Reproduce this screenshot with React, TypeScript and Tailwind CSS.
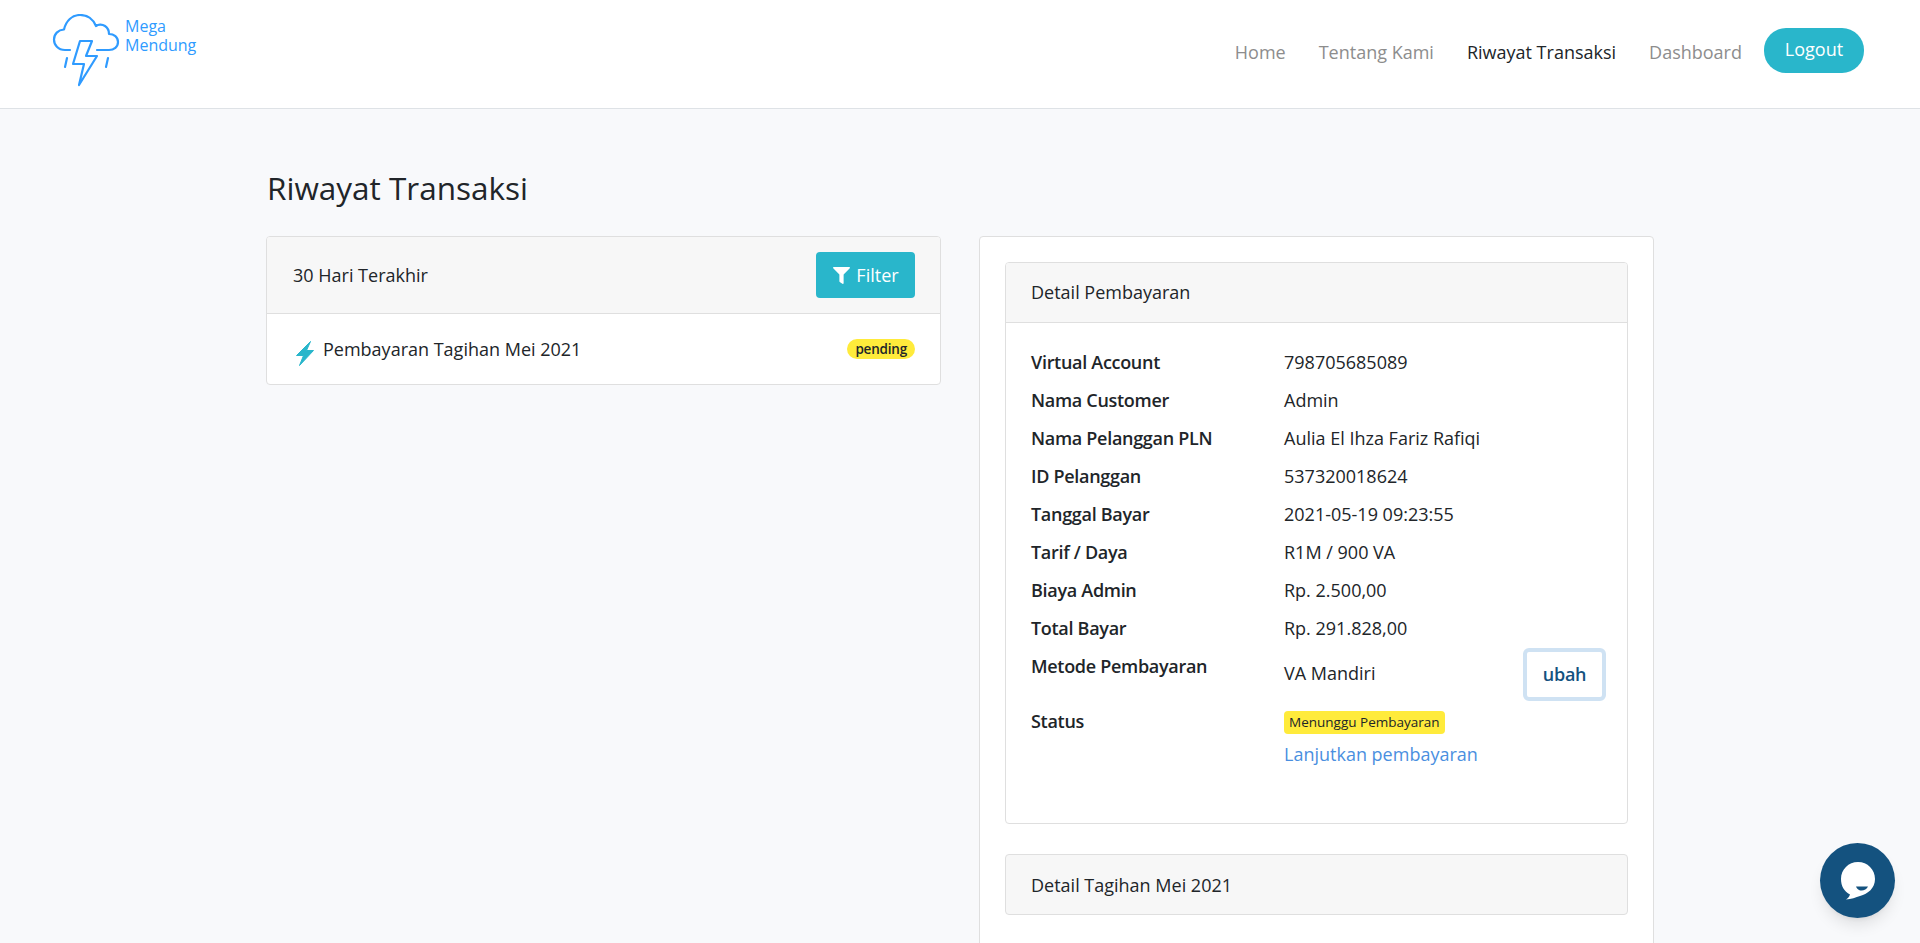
import { FaFilter } from 'react-icons/fa'

const rows = [
  ['Virtual Account', '798705685089'],
  ['Nama Customer', 'Admin'],
  ['Nama Pelanggan PLN', 'Aulia El Ihza Fariz Rafiqi'],
  ['ID Pelanggan', '537320018624'],
  ['Tanggal Bayar', '2021-05-19 09:23:55'],
  ['Tarif / Daya', 'R1M / 900 VA'],
  ['Biaya Admin', 'Rp. 2.500,00'],
  ['Total Bayar', 'Rp. 291.828,00'],
]

function Logo() {
  return (
    <div className="flex items-start">
      <svg width="68" height="76" viewBox="0 0 68 76" fill="none" stroke="#2f9bff" strokeWidth="2.2" strokeLinecap="round" strokeLinejoin="round" className="mt-[14px]">
        <path d="M18 36H13C6 36 2 31 2 25.500C2 20 6 16 12 15.500C14 7 20 1 28 1C35 1 41 5 44 12C46 10.500 50 10 53 12C56 14 57 17 57 20C62 20 66 23 66 28C66 33 62 36 57 36H45" />
        <path d="M28 27H40L34 42H45L27 71L32 50H21Z" />
        <path d="M15 44L13 53" />
        <path d="M56 44L54 53" />
      </svg>
      <div className="mt-[17px] ml-[5px] text-[16px] leading-[19px] text-[#2f9bff]">
        <div>Mega</div>
        <div>Mendung</div>
      </div>
    </div>
  )
}

export default function App() {
  return (
    <div className="h-[943px] overflow-hidden bg-[#f8f9fb] font-['Open_Sans',sans-serif] text-[18px] text-[#212529]">
      <nav className="h-[109px] bg-white border-b border-[#dee2e6] pl-[52px] pr-[56px] flex justify-between items-start">
        <Logo />
        <div className="flex items-center mt-[28px]">
          <a className="text-[#8d8d8d] mr-[33px] pt-[4px]">Home</a>
          <a className="text-[#8d8d8d] mr-[33px] pt-[4px]">Tentang Kami</a>
          <a className="text-[#212529] mr-[33px] pt-[4px]">Riwayat Transaksi</a>
          <a className="text-[#8d8d8d] mr-[22px] pt-[4px]">Dashboard</a>
          <button className="h-[45px] w-[100px] rounded-[22px] bg-[#29b6cb] text-white pb-[2px]">Logout</button>
        </div>
      </nav>

      <main className="w-[1388px] ml-[266px]">
        <h1 className="mt-[55px] pl-[1px] text-[31.5px] leading-[48px] font-normal">Riwayat Transaksi</h1>
        <div className="mt-[24px] flex justify-between items-start">
          <section className="w-[675px] bg-white border border-[#dfdfdf] rounded-[4px] overflow-hidden">
            <div className="h-[77px] bg-[#f7f7f7] border-b border-[#dfdfdf] pl-[26px] pr-[25px] flex items-center justify-between">
              <span>30 Hari Terakhir</span>
              <button className="h-[46px] w-[99px] rounded-[4px] bg-[#29b6cb] text-white pl-[1px] flex items-center justify-center gap-[6px]">
                <FaFilter size={17} />
                Filter
              </button>
            </div>
            <div className="h-[70px] pl-[26px] pr-[25px] flex items-start justify-between">
              <div className="flex items-start mt-[22px] leading-[27px]">
                <svg width="18" height="25" viewBox="0 0 18 25" className="mt-[5px] ml-[3px] mr-[9px]">
                  <path d="M14.500 0.500L0.500 14.500H7.500L3.500 24.500L17.500 9.500H10.500Z" fill="#29b6cb" stroke="#29b6cb" strokeWidth="1" strokeLinejoin="round" />
                </svg>
                <span>Pembayaran Tagihan Mei 2021</span>
              </div>
              <span className="mt-[25px] h-[20px] px-[8px] rounded-full bg-[#ffeb3b] text-[13.5px] tracking-[-0.2px] leading-[20px] font-semibold">pending</span>
            </div>
          </section>

          <section className="w-[675px] h-[800px] bg-white border border-[#dfdfdf] rounded-[4px] pt-[25px] px-[25px]">
            <div className="h-[562px] border border-[#dfdfdf] rounded-[4px] overflow-hidden">
              <div className="h-[60px] bg-[#f7f7f7] border-b border-[#dfdfdf] pl-[25px] flex items-center">Detail Pembayaran</div>
              <div className="pt-[26px] pl-[25px] pr-[21px]">
                {rows.map(([label, value]) => (
                  <div key={label} className="flex h-[38px] leading-[27px]">
                    <div className="w-[253px] font-semibold tracking-[-0.3px]">{label}</div>
                    <div>{value}</div>
                  </div>
                ))}
                <div className="flex h-[55px]">
                  <div className="w-[253px] font-semibold tracking-[-0.3px] leading-[27px]">Metode Pembayaran</div>
                  <div className="flex-1 flex items-start justify-between">
                    <span className="mt-[7px] leading-[27px]">VA Mandiri</span>
                    <button className="-mt-[5px] h-[53px] w-[83px] rounded-[6px] border-[4px] border-[#cfe2f3] font-semibold tracking-[-0.2px] text-[#14527f]">ubah</button>
                  </div>
                </div>
                <div className="flex">
                  <div className="w-[253px] font-semibold tracking-[-0.3px] leading-[27px]">Status</div>
                  <div className="flex flex-col items-start">
                    <span className="h-[23px] px-[5px] rounded-[4px] bg-[#ffeb3b] text-[13.5px] leading-[23px] font-medium mt-[3px]">Menunggu Pembayaran</span>
                    <a className="mt-[7px] leading-[27px] text-[#4a8fe0]">Lanjutkan pembayaran</a>
                  </div>
                </div>
              </div>
            </div>
            <div className="mt-[30px] h-[61px] bg-[#f7f7f7] border border-[#dfdfdf] rounded-[4px] pl-[25px] pt-[1px] flex items-center">Detail Tagihan Mei 2021</div>
          </section>
        </div>
      </main>

      <button className="fixed right-[25px] bottom-[25px] w-[75px] h-[75px] rounded-full bg-[#14527f] shadow-lg flex items-center justify-center">
        <svg width="36" height="40" viewBox="0 0 36 40">
          <path d="M18 1C27.500 1 35 8.500 35 18C35 27 28 33 20 35C16 36.500 11 38 6 38.500C8 37 9 36 10 33.500C4 30.500 1 25 1 18C1 8.500 8.500 1 18 1Z" fill="white" />
          <path d="M16 25.500H28C26.500 29 22 30.500 19 29C17.500 28.300 16.500 27 16 25.500Z" fill="#14527f" />
        </svg>
      </button>
    </div>
  )
}
